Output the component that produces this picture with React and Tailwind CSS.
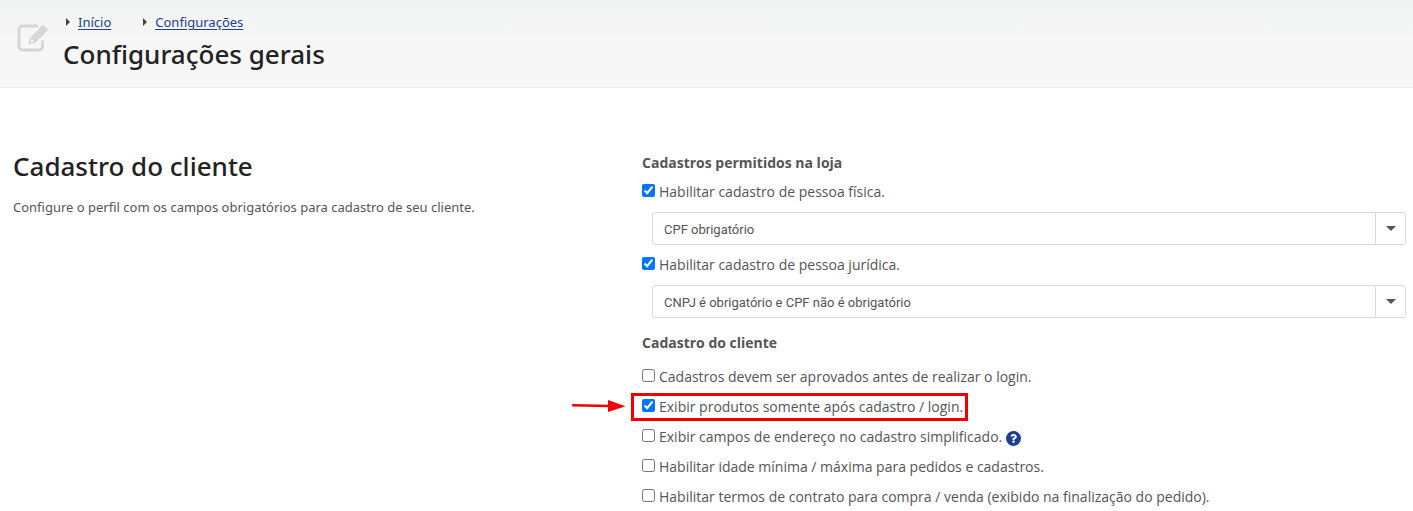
import { useId } from "react";
import { FaQuestion } from "react-icons/fa";

function EditIcon() {
  return (
    <svg className="mt-[22px] size-8 shrink-0" viewBox="0 0 32 32" aria-hidden="true">
      <path
        d="M22 4H6.500A3.500 3.500 0 0 0 3 7.500V24.500A3.500 3.500 0 0 0 6.500 28H23A3.500 3.500 0 0 0 26.500 24.500V18.500"
        fill="none"
        stroke="#d6d6d6"
        strokeWidth="3"
      />
      <path
        fillRule="evenodd"
        d="M27 2.800L32.200 7.700L19 21L12.500 22.800L13.800 16ZM15.600 16.800L14.400 20.900L18.200 19.800Z"
        fill="#d6d6d6"
      />
    </svg>
  );
}

function Crumb({ children }) {
  return (
    <li className="flex items-center gap-2">
      <svg className="h-2 w-1" viewBox="0 0 4 8" aria-hidden="true">
        <path d="M0 0l4 4-4 4z" fill="#444" />
      </svg>
      <a href="#" className="text-[#1c3f94] underline underline-offset-2">
        {children}
      </a>
    </li>
  );
}

function Check({ label, checked = false, children }) {
  const id = useId();
  return (
    <div className="flex h-[30px] items-center">
      <input id={id} type="checkbox" defaultChecked={checked} className="mb-[3px] size-[13px] shrink-0" />
      <label htmlFor={id} className="pl-1">
        {label}
      </label>
      {children}
    </div>
  );
}

function Select({ label, options }) {
  return (
    <div className="relative ml-[10px] h-[33px] rounded-[3px] border border-[#d9d9d9] bg-white">
      <select
        aria-label={label}
        className="size-full appearance-none rounded-[3px] bg-transparent pt-[3px] pr-10 pl-[11px] font-[Roboto,sans-serif] text-[13px] text-[#555]"
      >
        {options.map((option) => (
          <option key={option}>{option}</option>
        ))}
      </select>
      <span className="pointer-events-none absolute inset-y-0 right-0 flex w-[30px] items-center justify-center border-l border-[#d9d9d9]">
        <svg className="h-[5px] w-[10px]" viewBox="0 0 10 5" aria-hidden="true">
          <path d="M0 0h10L5 5z" fill="#555" />
        </svg>
      </span>
    </div>
  );
}

export default function App() {
  return (
    <div className="bg-white font-['Open_Sans',sans-serif] text-sm text-[#555]">
      <header className="flex h-[88px] gap-[15px] border-b border-[#eee] bg-linear-to-b from-[#f1f2f2] to-[#f7f7f7] to-50% pl-4">
        <EditIcon />
        <div className="pt-3">
          <nav aria-label="Caminho">
            <ul className="flex gap-8 pl-[3px] font-['Noto_Sans',sans-serif] text-[13px] leading-5">
              <Crumb>Início</Crumb>
              <Crumb>Configurações</Crumb>
            </ul>
          </nav>
          <h1 className="mt-1 font-['Noto_Sans',sans-serif] text-[26px] leading-9 font-medium text-[#222]">
            Configurações gerais
          </h1>
        </div>
      </header>

      <main className="grid grid-cols-[4fr_5fr] pt-[63px]">
        <section className="pl-[13px] font-['Noto_Sans',sans-serif]">
          <h2 className="text-[26px] leading-[30px] font-medium text-[#222]">Cadastro do cliente</h2>
          <p className="mt-4 text-[13px] leading-5">
            Configure o perfil com os campos obrigatórios para cadastro de seu cliente.
          </p>
        </section>

        <section className="pt-0.5 pr-[7px] pl-[14px]">
          <h3 className="leading-5 font-bold">Cadastros permitidos na loja</h3>
          <div className="mt-1 mb-[5px]">
            <Check label="Habilitar cadastro de pessoa física." checked />
          </div>
          <Select
            label="Cadastro de pessoa física"
            options={["CPF obrigatório", "CPF não é obrigatório"]}
          />
          <div className="my-[5px]">
            <Check label="Habilitar cadastro de pessoa jurídica." checked />
          </div>
          <Select
            label="Cadastro de pessoa jurídica"
            options={["CNPJ é obrigatório e CPF não é obrigatório", "CNPJ e CPF são obrigatórios"]}
          />

          <h3 className="mt-[15px] mb-[9px] leading-5 font-bold">Cadastro do cliente</h3>
          <Check label="Cadastros devem ser aprovados antes de realizar o login." />
          <div className="relative w-fit">
            <Check label="Exibir produtos somente após cadastro / login." checked />
            <span className="pointer-events-none absolute inset-y-px -right-[5px] -left-[11px] border-3 border-[#f00000]" />
            <svg
              className="pointer-events-none absolute top-2 right-full mr-4 h-3 w-[55px]"
              viewBox="0 0 55 12"
              aria-hidden="true"
            >
              <path d="M2 5.300L38 6" stroke="#f00000" strokeWidth="2.4" strokeLinecap="round" />
              <path d="M37 0L54.500 6.300L37 12z" fill="#f00000" />
            </svg>
          </div>
          <Check label="Exibir campos de endereço no cadastro simplificado.">
            <button
              type="button"
              aria-label="Ajuda"
              className="mt-[3px] ml-1 flex size-[15px] items-center justify-center rounded-full bg-[#1c3f94] text-white"
            >
              <FaQuestion className="size-[9px]" aria-hidden="true" />
            </button>
          </Check>
          <Check label="Habilitar idade mínima / máxima para pedidos e cadastros." />
          <Check label="Habilitar termos de contrato para compra / venda (exibido na finalização do pedido)." />
        </section>
      </main>
    </div>
  );
}
